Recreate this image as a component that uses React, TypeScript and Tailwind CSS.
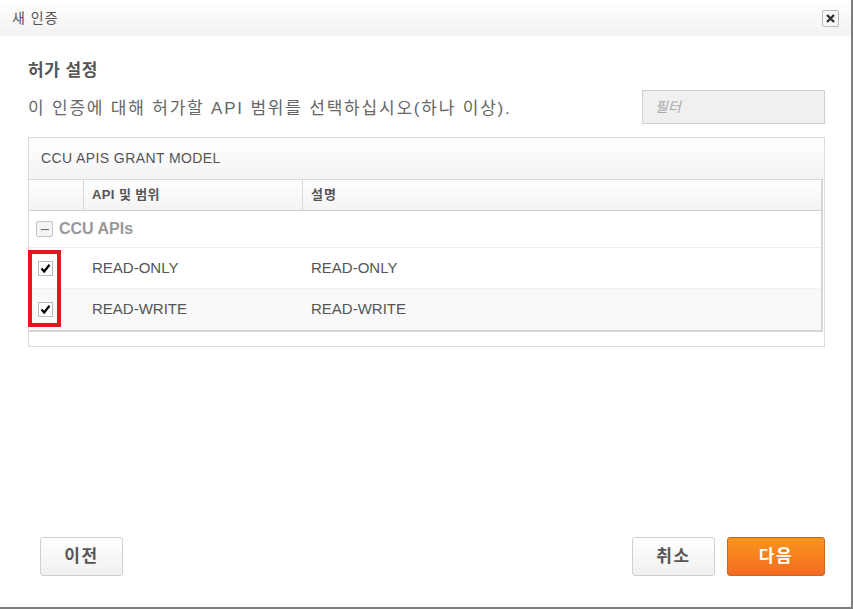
import React from "react"

const font = { fontFamily: '"Liberation Sans", "Noto Sans CJK KR", sans-serif' }

function Check() {
  return (
    <div className="w-[15px] h-[15px] border border-[#bbb] bg-white flex items-center justify-center">
      <svg width="11" height="11" viewBox="0 0 11 11">
        <path d="M1.5 5.5 L4.2 8.5 L9.5 1.8" fill="none" stroke="#000" strokeWidth="2.2" />
      </svg>
    </div>
  )
}

const rows = [
  { name: "READ-ONLY", desc: "READ-ONLY", alt: false },
  { name: "READ-WRITE", desc: "READ-WRITE", alt: true },
]

export default function App() {
  return (
    <div
      style={font}
      className="w-[853px] h-[609px] bg-white border-r-2 border-b-2 border-[#7d7d7d] flex flex-col overflow-hidden"
    >
      {/* title bar */}
      <div className="h-[36px] shrink-0 flex items-center justify-between pl-3 pr-[12px] bg-gradient-to-b from-white to-[#f2f2f2]">
        <span className="text-[14px] tracking-[1px] text-[#555]">새 인증</span>
        <button className="w-[17px] h-[17px] border border-[#bbb] rounded-[2px] bg-[#f6f6f6] flex items-center justify-center">
          <svg width="11" height="11" viewBox="0 0 11 11">
            <path d="M2 2 L9 9 M9 2 L2 9" stroke="#333" strokeWidth="2.4" />
          </svg>
        </button>
      </div>

      <div className="flex-1 flex flex-col pl-7 pr-[26px]">
        <h2 className="mt-[24px] text-[17px] font-bold text-[#555] leading-[22px] tracking-[0.5px]">허가 설정</h2>
        <div className="mt-[8px] flex items-center justify-between">
          <p className="text-[17px] tracking-[1.8px] text-[#666] mt-[4px]">이 인증에 대해 허가할 API 범위를 선택하십시오(하나 이상).</p>
          <div className="w-[183px] h-[34px] bg-[#f0f0f0] border border-[#cfcfcf] flex items-center px-[12px] text-[14px] italic text-[#aaa]">
            필터
          </div>
        </div>

        {/* grid panel */}
        <div className="mt-[13px] h-[210px] border border-[#dcdcdc] flex flex-col">
          <div className="h-[42px] shrink-0 flex items-center px-3 bg-gradient-to-b from-white to-[#f4f4f4] border-b border-[#d8d8d8] text-[14px] tracking-[0.4px] text-[#555]">
            CCU APIS GRANT MODEL
          </div>
          <div className="mr-[1px] border-r-2 border-b-2 border-[#d6d6d6]">
            <div className="h-[31px] flex border-b border-[#d0d0d0] bg-gradient-to-b from-white to-[#f3f3f3] text-[13px] font-bold text-[#555]">
              <div className="w-[55px] border-r border-[#d8d8d8]" />
              <div className="w-[219px] border-r border-[#d8d8d8] flex items-center px-[8px] tracking-[0.4px]">API 및 범위</div>
              <div className="flex-1 flex items-center px-[8px] tracking-[1px]">설명</div>
            </div>
            <div className="h-[37px] flex items-center gap-[6px] pl-[7px] border-b border-[#eee] bg-white">
              <div className="w-[17px] h-[16px] border border-[#c4c4c4] rounded-[2px] bg-[#f4f4f4] flex items-center justify-center">
                <div className="w-[8px] h-[1px] bg-[#666]" />
              </div>
              <span className="text-[16px] font-bold text-[#999]">CCU APIs</span>
            </div>
            {rows.map((r) => (
              <div
                key={r.name}
                className={`relative h-[41px] flex items-center text-[15px] text-[#555] ${r.alt ? "bg-[#f9f9f9]" : "bg-white border-b border-[#f0f0f0]"}`}
              >
                <div className="w-[55px] flex justify-start pl-[9px]">
                  <Check />
                </div>
                <div className="w-[219px] px-[8px]">{r.name}</div>
                <div className="flex-1 px-[8px]">{r.desc}</div>
              </div>
            ))}
          </div>
          <div className="relative">
            <div className="absolute left-[-1px] top-[-82px] w-[33px] h-[77px] border-4 border-[#e8141f]" />
          </div>
        </div>

        <div className="flex-1" />

        {/* footer buttons */}
        <div className="mb-[31px] flex items-center pl-[12px]">
          <button className="w-[83px] h-[39px] border border-[#d0d0d0] rounded-[3px] bg-gradient-to-b from-white to-[#f0f0f0] text-[17px] tracking-[1.5px] font-bold text-[#555]">
            이전
          </button>
          <div className="flex-1" />
          <button className="w-[83px] h-[39px] border border-[#d0d0d0] rounded-[3px] bg-gradient-to-b from-white to-[#f0f0f0] text-[17px] tracking-[1.5px] font-bold text-[#555]">
            취소
          </button>
          <button className="ml-[12px] w-[98px] h-[39px] border border-[#d0621a] rounded-[3px] bg-gradient-to-b from-[#f9961c] to-[#f26a22] text-[17px] tracking-[1.5px] font-bold text-white">
            다음
          </button>
        </div>
      </div>
    </div>
  )
}
